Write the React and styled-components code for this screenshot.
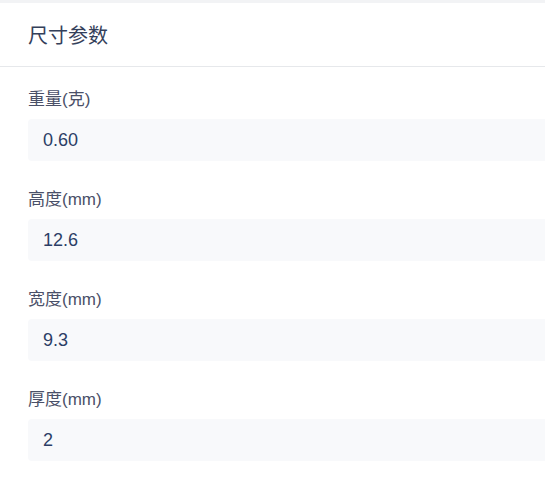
import styled, { createGlobalStyle } from "styled-components";

const GlobalStyle = createGlobalStyle`
  html, body {
    margin: 0;
    padding: 0;
    background: #f2f3f5;
    overflow: hidden;
  }
  body {
    font-family: "Liberation Sans", "Noto Sans CJK SC", sans-serif;
  }
`;

const Page = styled.div`
  width: 545px;
  height: 485px;
  padding-top: 3px;
  box-sizing: border-box;
  overflow: hidden;
`;

const Card = styled.section`
  width: 580px;
  height: 482px;
  background: #fff;
`;

const CardHeader = styled.header`
  height: 63px;
  display: flex;
  align-items: center;
  padding-left: 28px;
  border-bottom: 1px solid #e6e8eb;
  font-size: 20px;
  color: #34405a;
`;

const Body = styled.div`
  display: flex;
  flex-direction: column;
  gap: 26px;
  padding: 20px 0 0 28px;
`;

const Field = styled.div`
  display: flex;
  flex-direction: column;
  gap: 6px;
`;

const Label = styled.label`
  font-size: 17px;
  line-height: 26px;
  color: #4a5068;
`;

const Value = styled.div`
  height: 42px;
  display: flex;
  align-items: center;
  padding-left: 15px;
  background: #f8f9fb;
  border-radius: 4px;
  font-size: 18px;
  color: #2c3e66;
`;

const fields = [
  { label: "重量(克)", value: "0.60" },
  { label: "高度(mm)", value: "12.6" },
  { label: "宽度(mm)", value: "9.3" },
  { label: "厚度(mm)", value: "2" },
];

export default function App() {
  return (
    <Page>
      <GlobalStyle />
      <Card>
        <CardHeader>尺寸参数</CardHeader>
        <Body>
          {fields.map((f) => (
            <Field key={f.label}>
              <Label>{f.label}</Label>
              <Value>{f.value}</Value>
            </Field>
          ))}
        </Body>
      </Card>
    </Page>
  );
}
